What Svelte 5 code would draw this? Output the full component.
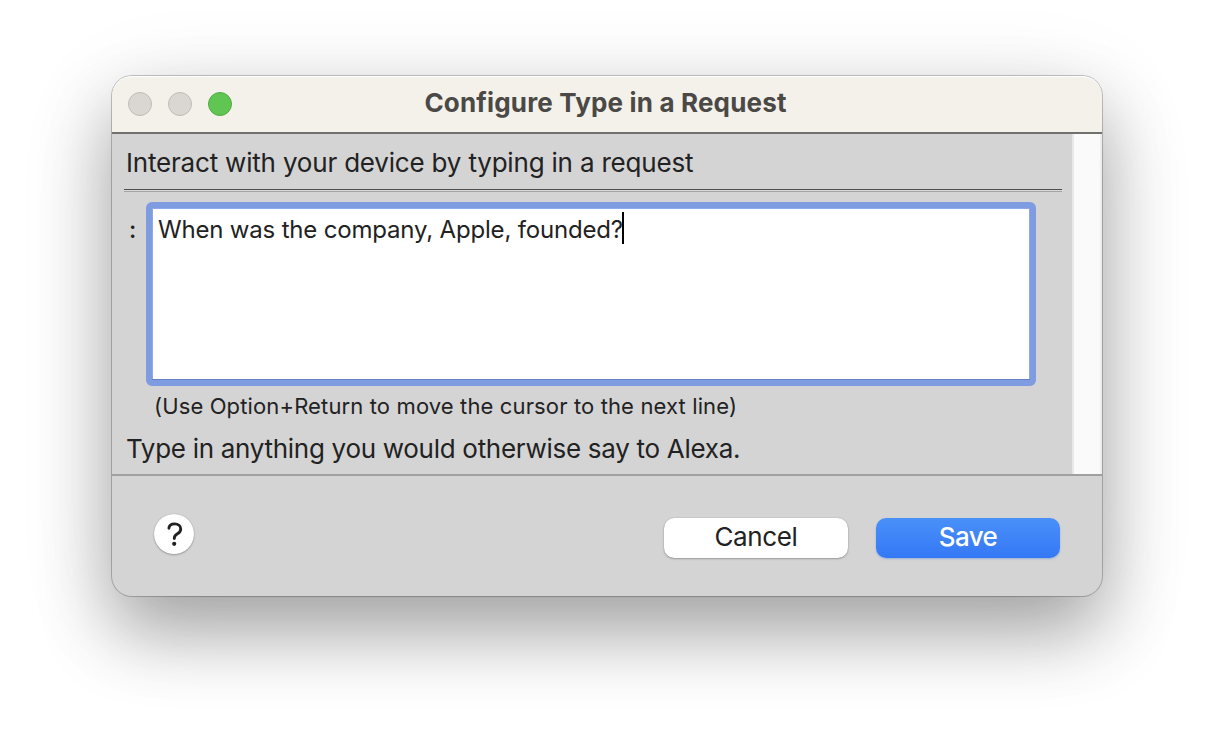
<script>
  let request = $state('When was the company, Apple, founded?');
</script>

<div class="desktop">
  <div class="window">
    <header>
      <div class="lights">
        <span class="light"></span>
        <span class="light"></span>
        <span class="light zoom"></span>
      </div>
      <h1><span>Configure Type in a Request</span></h1>
    </header>

    <main>
      <div class="pane">
        <p class="intro"><span>Interact with your device by typing in a request</span></p>
        <div class="rule"></div>
        <div class="row">
          <span class="colon">:</span>
          <div class="field"><span class="value">{request}</span><i class="caret"></i></div>
        </div>
        <p class="hint"><span>(Use Option+Return to move the cursor to the next line)</span></p>
        <p class="note"><span>Type in anything you would otherwise say to Alexa.</span></p>
      </div>
      <div class="track"></div>
    </main>

    <footer>
      <button class="help" aria-label="Help">
        <svg width="40" height="40" viewBox="0 0 40 40" fill="none">
          <path d="M14.9 14.2C15.1 11.5 17.3 9.9 20.7 9.9C24.2 9.9 26.7 11.9 26.7 14.9C26.7 17.1 25.6 18.5 23.4 19.8C21.1 21.2 20.3 22.1 20.3 24V24.5" stroke="#222" stroke-width="2.9" stroke-linecap="round" stroke-linejoin="round" />
          <circle cx="20.2" cy="29.8" r="2.1" fill="#222" />
        </svg>
      </button>
      <button class="btn cancel"><span>Cancel</span></button>
      <button class="btn save"><span>Save</span></button>
    </footer>
  </div>
</div>

<style>
  :global(body) { margin: 0; background: #fff; }
  .desktop {
    box-sizing: border-box;
    width: 1214px;
    height: 744px;
    padding: 76px 112px 0;
    overflow: hidden;
    background: #fff;
    font-family: Inter, 'Liberation Sans', sans-serif;
    color: #222;
  }
  .window {
    display: flex;
    flex-direction: column;
    width: 990px;
    height: 520px;
    border-radius: 20px;
    background: #d4d4d4;
    box-shadow:
      0 0 0 1px rgba(0, 0, 0, 0.2),
      0 0 2px rgba(0, 0, 0, 0.08),
      0 36px 72px rgba(0, 0, 0, 0.31),
      0 20px 100px rgba(0, 0, 0, 0.11);
  }
  p, h1 { margin: 0; font-weight: 400; white-space: nowrap; }
  header {
    display: grid;
    grid-template-columns: 200px 1fr 203px;
    height: 56px;
    border-bottom: 2px solid #70706c;
    border-radius: 20px 20px 0 0;
    background: #f4f1eb;
    box-shadow: inset 0 2px 1px -1px #fff;
  }
  .lights { display: flex; gap: 16px; padding: 16px 0 0 16px; }
  .light {
    box-sizing: border-box;
    width: 24px;
    height: 24px;
    border: 1px solid #bfbcb7;
    border-radius: 50%;
    background: #dad7d2;
  }
  .zoom { border-color: #50ac40; background: #61c554; }
  h1 { color: #4a4946; font-size: 26px; font-weight: 700; line-height: 53px; text-align: center; letter-spacing: 0.17px; }
  main { display: flex; height: 340px; border-bottom: 2px solid #a0a0a0; }
  .pane { flex: 1; }
  .track {
    box-sizing: border-box;
    width: 30px;
    border: solid #e8e8e8;
    border-width: 0 2px;
    border-right-color: #eee;
    background: #fafafa;
  }
  .intro { padding: 13px 0 11px 14px; font-size: 26px; line-height: 31px; letter-spacing: -0.19px; }
  .rule {
    height: 1px;
    margin: 0 10px 0 12px;
    border-top: 1px solid #4e4e4e;
    border-bottom: 1px solid #a4a4a4;
    background: #dadada;
  }
  .row { display: flex; padding: 10px 0 0 16px; }
  .colon { width: 17px; padding-left: 1px; font-size: 24px; font-weight: 500; line-height: 56px; }
  .field {
    box-sizing: border-box;
    display: flex;
    width: 890px;
    height: 184px;
    padding: 4px 0 0 6px;
    border: 6px solid #7f9ce0;
    border-radius: 6px;
    background: #fff;
    box-shadow: inset 0 -1px 0 #6580c8, inset 0 0 0 1px #8ca8ef;
    font-size: 24px;
    line-height: 35px;
    letter-spacing: -0.18px;
    white-space: nowrap;
  }
  .caret { width: 2px; height: 32px; margin-left: -1px; background: #000; }
  .hint { padding: 5px 0 0 42px; font-size: 22px; line-height: 30px; letter-spacing: 0.13px; }
  .note { padding: 12px 0 0 14px; font-size: 26px; line-height: 31px; letter-spacing: -0.29px; }
  footer { display: flex; align-items: flex-start; height: 120px; }
  button { border: 0; padding: 0; font-family: inherit; color: #222; background: #fff; }
  .help {
    width: 40px;
    height: 40px;
    margin: 38px auto 0 42px;
    border-radius: 50%;
    box-shadow: 0 0 1px rgba(0, 0, 0, 0.3), 0 1px 2px rgba(0, 0, 0, 0.25);
  }
  .help svg { display: block; }
  .btn {
    width: 184px;
    height: 40px;
    margin-top: 42px;
    border-radius: 10px;
    font-size: 26px;
    line-height: 37px;
    letter-spacing: -0.35px;
    padding-bottom: 3px;
    box-shadow: 0 0 1px rgba(0, 0, 0, 0.35), 0 1px 2px rgba(0, 0, 0, 0.25);
  }
  .cancel { margin-right: 28px; }
  .save {
    margin-right: 42px;
    color: #fff;
    font-weight: 500;
    letter-spacing: -0.55px;
    background: linear-gradient(#4a90f8, #3478f6);
    box-shadow: 0 1px 2px rgba(52, 110, 230, 0.35);
  }
</style>
